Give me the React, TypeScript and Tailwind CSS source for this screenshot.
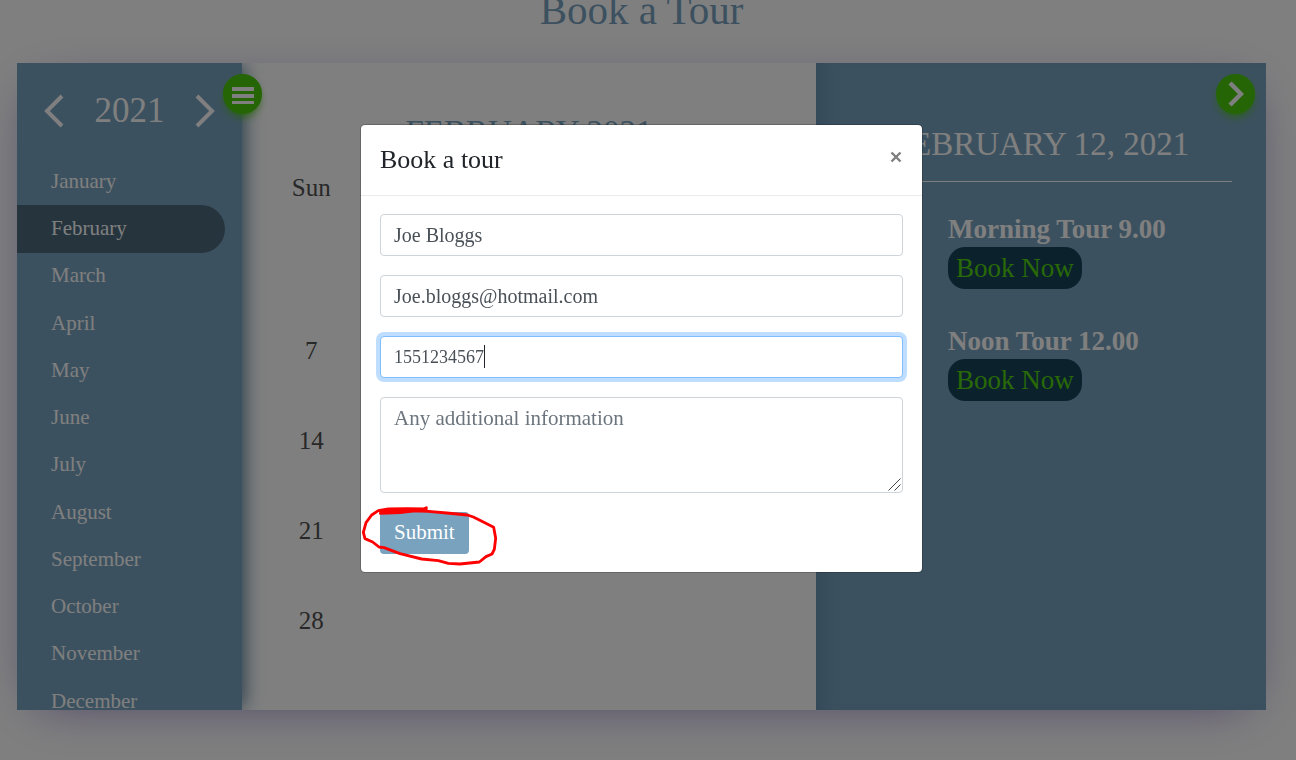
import { useEffect, useRef } from "react";

const MONTHS = [
  "January",
  "February",
  "March",
  "April",
  "May",
  "June",
  "July",
  "August",
  "September",
  "October",
  "November",
  "December",
];

const WEEKDAYS = ["Sun", "Mon", "Tue", "Wed", "Thu", "Fri", "Sat"];

const WEEKS: (number | null)[][] = [
  [null, 1, 2, 3, 4, 5, 6],
  [7, 8, 9, 10, 11, 12, 13],
  [14, 15, 16, 17, 18, 19, 20],
  [21, 22, 23, 24, 25, 26, 27],
  [28, null, null, null, null, null, null],
];

const TOURS = ["Morning Tour 9.00", "Noon Tour 12.00"];

function Sidebar() {
  return (
    <aside className="z-10 w-[225px] shrink-0 bg-[#78a2be] text-white shadow-[5px_0_18px_-3px_#4c7892]">
      <div className="flex h-[95px] items-center justify-between px-[27px]">
        <button type="button" aria-label="Previous year">
          <svg width="20" height="34" viewBox="0 0 20 34" fill="none" stroke="currentColor" strokeWidth="4">
            <path d="M18 2 3 17l15 15" />
          </svg>
        </button>
        <p className="text-[35px] leading-10">2021</p>
        <button type="button" aria-label="Next year">
          <svg width="20" height="34" viewBox="0 0 20 34" fill="none" stroke="currentColor" strokeWidth="4">
            <path d="m2 2 15 15L2 32" />
          </svg>
        </button>
      </div>
      <ul className="flex h-[567px] flex-col">
        {MONTHS.map((month) => (
          <li key={month} className="flex-1 pr-[17px]">
            <button
              type="button"
              className={
                month === "February"
                  ? "h-full w-full rounded-r-full bg-[#4c687c] pl-[34px] text-left text-[21px]"
                  : "h-full w-full pl-[34px] text-left text-[21px]"
              }
            >
              {month}
            </button>
          </li>
        ))}
      </ul>
    </aside>
  );
}

function MonthView() {
  return (
    <section className="min-w-0 flex-1 px-[33px] pt-[47px]">
      <h2 className="h-[50px] text-center text-[33px] leading-[45px] text-[#78a2be]">FEBRUARY 2021</h2>
      <table className="w-full table-fixed text-center text-[25px] text-[#505050]">
        <thead>
          <tr className="h-[56px]">
            {WEEKDAYS.map((day) => (
              <th key={day} scope="col" className="p-0 font-normal">
                {day}
              </th>
            ))}
          </tr>
        </thead>
        <tbody>
          {WEEKS.map((week, row) => (
            <tr key={row} className="h-[90px]">
              {week.map((day, col) => (
                <td key={col} className="p-0">
                  {day}
                </td>
              ))}
            </tr>
          ))}
        </tbody>
      </table>
    </section>
  );
}

function EventPanel() {
  return (
    <section className="w-[450px] shrink-0 bg-[#78a2be] px-[34px] pt-[55px] text-white shadow-[inset_18px_0_18px_-12px_#6690ac]">
      <h2 className="h-[64px] border-b border-white text-center text-[33px] leading-[52px]">FEBRUARY 12, 2021</h2>
      <div className="flex flex-col gap-[34px] pt-[29px] pl-[98px]">
        {TOURS.map((tour) => (
          <div key={tour} className="flex flex-col items-start">
            <h3 className="text-[27px] leading-9 font-bold">{tour}</h3>
            <button
              type="button"
              className="h-[42px] rounded-[17px] bg-[#16445a] px-2 text-[27px] leading-10 text-[#52d20c]"
            >
              Book Now
            </button>
          </div>
        ))}
      </div>
    </section>
  );
}

function Calendar() {
  return (
    <div className="relative mx-[17px] flex h-[647px] shadow-[0_10px_50px_-20px_#8773c1]">
      <div className="flex min-w-0 flex-1 overflow-hidden bg-white">
        <Sidebar />
        <MonthView />
        <EventPanel />
      </div>
      <button
        type="button"
        aria-label="Toggle sidebar"
        className="absolute top-[11px] left-[206px] z-20 flex h-10 w-[39px] items-center justify-center rounded-full bg-[#4cca0c] pt-[3px] text-white shadow-[0_5px_10px_-3px_#4cca0c]"
      >
        <svg width="22" height="17" viewBox="0 0 22 17" fill="currentColor">
          <path d="M0 0h22v4H0zM0 7h22v4H0zM0 14h22v3H0z" />
        </svg>
      </button>
      <button
        type="button"
        aria-label="Toggle events"
        className="absolute top-[11px] right-[11px] z-20 flex h-10 w-[39px] items-center justify-center rounded-full bg-[#4cca0c] text-white shadow-[0_5px_10px_-3px_#4cca0c]"
      >
        <svg width="16" height="26" viewBox="0 0 16 26" fill="none" stroke="currentColor" strokeWidth="4.4">
          <path d="m2 2 11 11L2 24" />
        </svg>
      </button>
    </div>
  );
}

const FIELD =
  "block w-full rounded border border-[#ced4da] bg-white px-[13px] text-[#495057] outline-none placeholder:text-[#6c757d]";

function BookingDialog() {
  const phone = useRef<HTMLInputElement>(null);

  useEffect(() => {
    const input = phone.current;
    if (input) {
      input.focus();
      input.setSelectionRange(input.value.length, input.value.length);
    }
  }, []);

  return (
    <div className="fixed inset-0 z-30 bg-black/50 pt-[124px] pr-[13px]">
      <div
        role="dialog"
        aria-modal="true"
        aria-labelledby="booking-title"
        className="mx-auto max-w-[563px] rounded-[5px] border border-black/20 bg-white bg-clip-padding"
      >
        <header className="flex h-[71px] items-center justify-between border-b border-[#e9ecef] px-[19px]">
          <h2 id="booking-title" className="text-[26px] leading-8 text-[#212529]">
            Book a tour
          </h2>
          <button type="button" aria-label="Close" className="mb-[6px] text-[#7f7f7f]">
            <svg width="14" height="14" viewBox="0 0 14 14" fill="none" stroke="currentColor" strokeWidth="2.4">
              <path d="m2.5 2.5 9 9m0-9-9 9" />
            </svg>
          </button>
        </header>
        <form className="flex flex-col gap-[19px] px-[19px] py-[18px]" onSubmit={(e) => e.preventDefault()}>
          <input type="text" aria-label="Name" defaultValue="Joe Bloggs" className={`${FIELD} h-[42px] text-[20px]`} />
          <input
            type="email"
            aria-label="Email"
            defaultValue="Joe.bloggs@hotmail.com"
            className={`${FIELD} h-[42px] text-[20px]`}
          />
          <div className="relative">
            <input
              ref={phone}
              type="tel"
              aria-label="Phone"
              defaultValue="1551234567"
              className={`${FIELD} h-[42px] text-[18px] caret-transparent focus:border-[#80bdff] focus:ring-4 focus:ring-[#007bff]/25`}
            />
            <span className="pointer-events-none absolute top-[9px] left-[104px] h-[23px] w-px bg-[#212529]" />
          </div>
          <div className="relative">
            <textarea
              aria-label="Additional information"
              placeholder="Any additional information"
              className={`${FIELD} h-[96px] resize-none py-[6px] text-[21px] leading-[28px]`}
            />
            <svg
              className="pointer-events-none absolute right-[2px] bottom-[2px]"
              width="13"
              height="13"
              viewBox="0 0 13 13"
              fill="none"
              stroke="#444444"
              strokeWidth="1"
            >
              <path d="M.5 12.5l12-12M6.500 12.5l6-6" />
            </svg>
          </div>
          <div className="relative">
            <button type="submit" className="h-[42px] rounded bg-[#78a2be] px-[14px] text-[21px] text-white">
              Submit
            </button>
            <svg
              className="pointer-events-none absolute -top-8 -left-[30px]"
              width="200"
              height="110"
              viewBox="0 0 600 330"
              fill="none"
              stroke="#ff0000"
              strokeWidth="8.500"
              strokeLinecap="round"
              strokeLinejoin="round"
            >
              <path d="M91 100 150 98 215 90 229 83M229 87 170 86 115 87 85 92 65 105 48 128 40 157 45 176 68 186 87 201 102 203 150 221 215 237 265 242 295 250 330 252 388 246 408 230 426 222 433 208 437 175 431 142 400 126 370 111 352 105 290 99 235 94 160 92 92 96" />
            </svg>
          </div>
        </form>
      </div>
    </div>
  );
}

export default function App() {
  return (
    <div className="h-screen overflow-hidden bg-white font-['Liberation_Serif',serif]">
      <main className="pr-[13px]">
        <h1 className="-mt-[14px] mb-[29px] text-center text-[41px] leading-[48px] text-[#78a2be]">Book a Tour</h1>
        <Calendar />
      </main>
      <BookingDialog />
    </div>
  );
}
